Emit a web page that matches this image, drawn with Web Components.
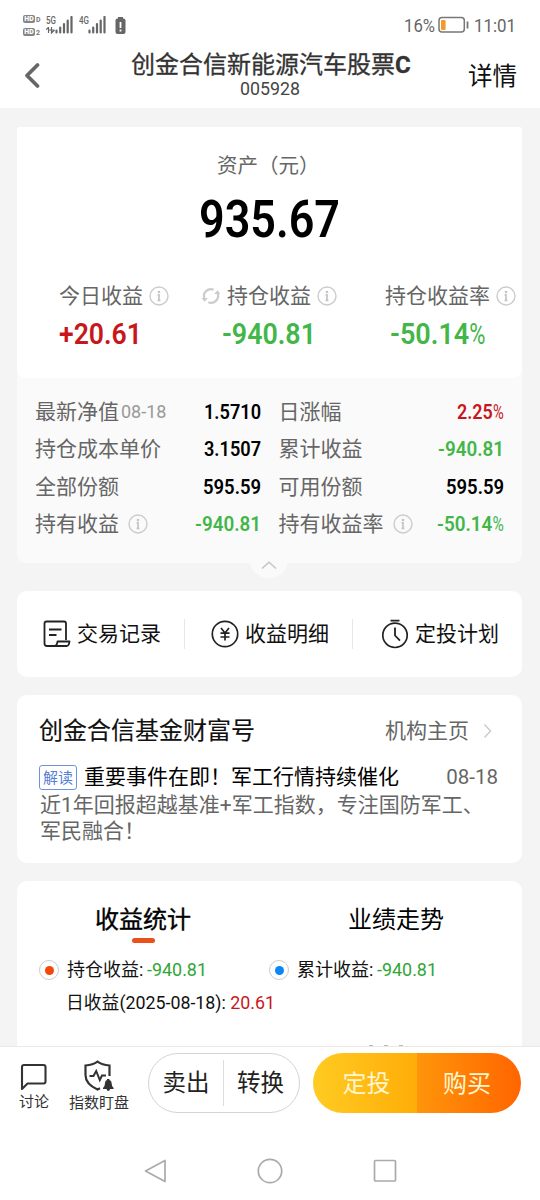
<!DOCTYPE html>
<html lang="zh-CN">
<head>
<meta charset="utf-8">
<meta name="viewport" content="width=device-width">
<title>创金合信新能源汽车股票C</title>
<style>
html,body{margin:0;background:#fff}
body{font-family:Roboto,"Noto Sans CJK SC",sans-serif;width:540px;height:1200px;overflow:hidden}
</style>
</head>
<body>
<fund-app></fund-app>
<script>
const define = (name, css, html) => customElements.define(name, class extends HTMLElement {
  connectedCallback() {
    if (this.shadowRoot) return;
    const t = document.createElement('template');
    t.innerHTML = `<style>*{box-sizing:border-box}:host{display:block;box-sizing:border-box}${css}</style>${html}`;
    this.attachShadow({mode: 'open'}).append(t.content.cloneNode(true));
  }
});

/* Text whose glyphs are condensed or widened to fill the width "w". */
customElements.define('fit-text', class extends HTMLElement {
  connectedCallback() {
    if (this.shadowRoot) return;
    const root = this.attachShadow({mode: 'open'});
    root.innerHTML = `<style>:host{display:block;flex:none;white-space:nowrap}span{display:inline-block;transform-origin:0 50%}</style><span><slot></slot></span>`;
    const w = +this.getAttribute('w'), s = root.querySelector('span');
    this.style.width = w + 'px';
    s.style.transform = `scaleX(${w / s.getBoundingClientRect().width})`;
  }
});

const icons = {
  back: [16, 26, '<path d="M13.5 2 3 12.5 13.5 23" fill="none" stroke="#666" stroke-width="3.7" stroke-linecap="round" stroke-linejoin="round"/>'],
  info: [20, 20, '<circle cx="10" cy="10" r="9" fill="none" stroke="#ccc" stroke-width="1.4"/><circle cx="10" cy="6" r="1.3" fill="#c4c4c4"/><path d="M8.6 8.8H10V14.500M8.600 14.300h2.800" fill="none" stroke="#c4c4c4" stroke-width="1.7"/>'],
  refresh: [20, 20, '<path d="M3.3 12.5A7 7 0 0 1 12.6 3.8M16.7 7.5A7 7 0 0 1 7.4 16.2" fill="none" stroke="#ccc" stroke-width="2.2"/><path d="m.5 12 3 3.700 3.500-3.700zM19.500 8l-3-3.700-3.500 3.700z" fill="#ccc"/>'],
  record: [28, 28, '<path d="M23 20V3.5Q23 1.500 21 1.500H3.500Q1.500 1.500 1.500 3.500V23.500Q1.500 26 4 26H23.500Q26 26 26.500 21.500H14.500Q14 26 11 26" fill="none" stroke="#222" stroke-width="1.8" stroke-linejoin="round"/><path d="M6 9.500H18.500M6 15H13.500" stroke="#222" stroke-width="1.8"/>'],
  yuan: [28, 28, '<circle cx="14" cy="14" r="12.7" fill="none" stroke="#222" stroke-width="1.7"/><path d="m10 8 4 5 4-5M9.500 13.200H18.500M9.500 17H18.500M14 13v7.500" fill="none" stroke="#222" stroke-width="1.7"/>'],
  timer: [28, 30, '<circle cx="14" cy="16.300" r="12.200" fill="none" stroke="#222" stroke-width="1.7"/><path d="M9.500 1.600H18.500M14 8.600V16.500L19 21.700" fill="none" stroke="#222" stroke-width="1.8"/>'],
  right: [9, 16, '<path d="m1.500 1.500 6 6.500-6 6.500" fill="none" stroke="#ccc" stroke-width="1.5"/>'],
  up: [16, 9, '<path d="m1 7.500 7-6.300 7 6.300" fill="none" stroke="#c4c4c4" stroke-width="1.500"/>'],
  chat: [28, 28, '<path d="M2 26V4Q2 2 4 2H23.500Q25.500 2 25.500 4V18.500Q25.500 20.500 23.500 20.500H7.500Z" fill="none" stroke="#333" stroke-width="2.1" stroke-linejoin="round"/>'],
  shield: [32, 32, '<path d="M26.500 16V5.500Q19 5 14.500 1.700Q10 5 2.500 5.500V15Q2.500 24 14.500 29.500L17 28.200" fill="none" stroke="#333" stroke-width="2.200"/><path d="M6.500 16h4l2.700-5 3.600 9 2.200-4.500H23" fill="none" stroke="#333" stroke-width="2"/><path d="M20 29v-1q2-1.500 2-5 0-2.500 2-3V19h2.400v1q2.200.5 2.200 3 0 3.500 2 5v1h-3.500q-.5 2-1.800 2t-1.800-2z" fill="#333"/>'],
  signal: [18, 18, '<path d="M1.500 14.500v2M5.200 11.500v5M9 8v8.500M12.700 4.500v12M16.500 1v15.500" stroke="#666" stroke-width="2.200" stroke-linecap="round"/>'],
  arrows: [9, 7, '<path d="M0 2.500 2.500.500V6M5.500 0v6L8.500 3M3 3h5" fill="none" stroke="#666" stroke-width="1.200"/>'],
  alert: [11, 18, '<path d="M3 0h5v2H3z" fill="#666"/><rect x=".5" y="1.500" width="10" height="15.500" rx="2" fill="#666"/><path d="M5.500 5v6M5.500 12.500v2" stroke="#fff" stroke-width="1.800"/>'],
  battery: [32, 18, '<rect x="1" y="1.500" width="25.300" height="14.500" rx="3" fill="none" stroke="#777" stroke-width="1.500"/><rect x="3" y="4" width="4.600" height="10" rx="1" fill="#f39a2c"/><path d="M29.500 5.500v7" stroke="#777" stroke-width="1.800"/>'],
  navback: [24, 26, '<path d="M22 2.500V23.500L2.500 13Z" fill="none" stroke="#aaa" stroke-width="1.700" stroke-linejoin="round"/>'],
  navhome: [26, 26, '<circle cx="13" cy="13" r="11.700" fill="none" stroke="#aaa" stroke-width="1.700"/>'],
  navtasks: [24, 24, '<rect x="1.500" y="1.500" width="21" height="20.500" rx="1" fill="none" stroke="#aaa" stroke-width="1.700"/>']
};
customElements.define('app-icon', class extends HTMLElement {
  connectedCallback() {
    if (this.shadowRoot) return;
    const [w, h, body] = icons[this.getAttribute('name')];
    this.attachShadow({mode: 'open'}).innerHTML = `<style>:host{display:block;flex:none;width:${w}px;height:${h}px}svg{display:block}</style><svg width="${w}" height="${h}" viewBox="0 0 ${w} ${h}">${body}</svg>`;
  }
});

define('hd-badge', ':host{display:flex;align-items:center;height:10px;font:700 7px/8px Roboto;color:#777;gap:1px}b{background:#858585;color:#fff;border-radius:2px;width:12px;height:8px;text-align:center;font-size:7px;line-height:8.500px}i{font-style:normal;font-size:7px;padding-top:1px}',
  '<b>HD</b><i><slot></slot></i>');

define('status-bar', `:host{height:50px;display:flex;align-items:flex-start;color:#666;padding:0 24px 0 23px}
.hd{padding-top:14px;display:grid;gap:3px;width:23px}.net{width:11px;padding-top:15px;font:500 10.500px/11px Roboto}.net app-icon{margin-top:1px}
.bars{margin-top:16px;margin-left:-2px}.g{margin-left:6px}.alert{margin:17px 0 0 9px}.right{margin-left:auto;display:flex;align-items:center;height:50px;font-size:18px}`,
  `<div class="hd"><hd-badge>D</hd-badge><hd-badge>2</hd-badge></div>
<div class="net"><fit-text w="10">5G</fit-text><app-icon name="arrows"></app-icon></div><app-icon class="bars" name="signal"></app-icon>
<div class="net g"><fit-text w="10">4G</fit-text></div><app-icon class="bars" style="margin-left:-2px" name="signal"></app-icon>
<app-icon class="alert" name="alert"></app-icon>
<div class="right"><fit-text w="31">16%</fit-text><app-icon name="battery" style="margin:0 4px 0 3px"></app-icon><fit-text w="42">11:01</fit-text></div>`);

define('page-header', `:host{height:58px;display:grid;grid-template-columns:131px 280px 1fr;align-items:start}
app-icon{margin:13px 0 0 24px}.t{font-size:24px;line-height:30px;font-weight:400;-webkit-text-stroke:.3px #333;color:#333;white-space:nowrap}.t b{font-weight:700}.c{font-size:17.500px;line-height:20px;color:#444;display:flex;justify-content:center;margin-top:-1px;padding-right:3px}
.d{font-size:24.500px;line-height:30px;margin:12px 0 0 57px;color:#111}`,
  `<app-icon name="back"></app-icon><div><div class="t">创金合信新能源汽车股票<b>C</b></div><div class="c"><fit-text w="60">005928</fit-text></div></div><div class="d">详情</div>`);

define('metric-item', `:host{display:block}.l{display:flex;align-items:center;height:26px;font-size:21px;line-height:28px;color:#666;white-space:nowrap}
.l app-icon{margin-left:6px}::slotted([slot=pre]){margin-right:6px}.v{height:34px;line-height:34px;font-size:29px;font-weight:600;margin-top:8px}`,
  `<div class="l"><slot name="pre"></slot><slot></slot><app-icon name="info"></app-icon></div><div class="v"><slot name="value"></slot></div>`);

define('asset-card', `:host{height:251px;background:#fff;border-radius:3px 3px 9px 9px;padding-top:25px}
.h{font-size:20.500px;line-height:28px;color:#666;padding-left:200px}.n{font-size:52px;font-weight:600;line-height:60px;display:flex;justify-content:center;margin-top:10px;color:#000;padding-right:1px}
.m{display:grid;grid-template-columns:142px 184px 1fr;margin-top:33px;padding-left:42px}.r{color:#c8161d}.g{color:#43b649}i{font-style:normal;font-weight:400;display:inline-block;width:.62em;transform:scaleX(.82);transform-origin:0 50%}`,
  `<div class="h">资产（元）</div><div class="n"><fit-text w="141">935.67</fit-text></div>
<div class="m"><metric-item>今日收益<fit-text slot="value" class="r" w="83">+20.61</fit-text></metric-item>
<metric-item><app-icon slot="pre" name="refresh"></app-icon>持仓收益<fit-text slot="value" class="g" w="94" style="margin-left:21px">-940.81</fit-text></metric-item>
<metric-item>持仓收益率<fit-text slot="value" class="g" w="96" style="margin-left:5px">-50.14<i>%</i></fit-text></metric-item></div>`);

define('detail-row', `:host{display:flex;align-items:center;height:37.500px;font-size:21px;line-height:28px;color:#666;white-space:nowrap}
.v{margin-left:auto;font-weight:600;font-size:21px}`,
  `<slot></slot><div class="v"><slot name="value"></slot></div>`);

define('holding-details', `:host{height:185px;background:#fafafa;border-radius:0 0 9px 9px;padding:15px 17px 0 18px}
.grid{display:grid;grid-template-columns:226px 225px;column-gap:17.500px;color:#000}small{font-size:18px;color:#999;margin-left:2px}.k{color:#000}.r{color:#c8161d}.g{color:#43b649}app-icon{margin-left:9px}i{font-style:normal;font-weight:400;display:inline-block;width:.62em;transform:scaleX(.82);transform-origin:0 50%}
.tab{width:38px;height:34px;border-radius:50%;background:#fafafa;margin:-3px auto 0;padding:17px 0 0 11px;position:relative;left:-1px;top:4px}.tab app-icon{margin:0}`,
  `<div class="grid">
<detail-row>最新净值<small>08-18</small><fit-text slot="value" class="k" w="57">1.5710</fit-text></detail-row>
<detail-row>日涨幅<fit-text slot="value" class="r" w="47">2.25<i>%</i></fit-text></detail-row>
<detail-row>持仓成本单价<fit-text slot="value" class="k" w="57">3.1507</fit-text></detail-row>
<detail-row>累计收益<fit-text slot="value" class="g" w="66">-940.81</fit-text></detail-row>
<detail-row>全部份额<fit-text slot="value" class="k" w="58">595.59</fit-text></detail-row>
<detail-row>可用份额<fit-text slot="value" class="k" w="58">595.59</fit-text></detail-row>
<detail-row>持有收益<app-icon name="info"></app-icon><fit-text slot="value" class="g" w="66">-940.81</fit-text></detail-row>
<detail-row>持有收益率<app-icon name="info"></app-icon><fit-text slot="value" class="g" w="67">-50.14<i>%</i></fit-text></detail-row>
</div><div class="tab"><app-icon name="up"></app-icon></div>`);

define('quick-actions', `:host{height:86px;background:#fff;border-radius:10px;margin-top:28px;display:grid;grid-template-columns:168px 168px 1fr;align-items:center}
div{height:30px;display:flex;align-items:center;font-size:21px;line-height:32px;color:#111;gap:6px;border-right:1px solid #e8e8e8;padding-left:26px}div:last-child{border:0}`,
  `<div><app-icon name="record"></app-icon>交易记录</div><div><app-icon name="yuan"></app-icon>收益明细</div><div style="padding-left:28px"><app-icon name="timer"></app-icon>定投计划</div>`);

define('fund-news', `:host{height:168px;background:#fff;border-radius:10px;margin-top:18px;padding:19px 23px 0 22px}
.h,.n{display:flex;align-items:center;white-space:nowrap}.h{height:34px;line-height:34px;font-size:24px;-webkit-text-stroke:.15px #111;color:#111}.h span{font-size:21px;-webkit-text-stroke:0;color:#666;margin-left:auto}.h app-icon{margin:0 7px 0 14px}
.n{height:28px;margin-top:15px;font-size:21px;line-height:28px;color:#000}.tag{width:38px;height:25px;border:1px solid #6c93df;border-radius:3px;color:#5580d4;font-size:15px;line-height:24px;text-align:center;margin-right:7px}.n time{margin-left:auto;color:#666;font-size:20.500px;padding-right:1px}
p{margin:2px 0 0 1px;font-size:21px;line-height:25.500px;color:#666;white-space:nowrap}`,
  `<div class="h">创金合信基金财富号<span>机构主页</span><app-icon name="right"></app-icon></div>
<div class="n"><div class="tag">解读</div>重要事件在即！军工行情持续催化<time>08-18</time></div><p>近1年回报超越基准+军工指数，专注国防军工、<br>军民融合！</p>`);

define('series-label', `:host{display:flex;align-items:center;height:24px;font-size:18px;line-height:24px;color:#111;white-space:nowrap}
.dot{width:20px;height:20px;border:1px solid #ccc;border-radius:50%;padding:4.500px;margin-right:8px}.dot::before{content:"";display:block;width:9px;height:9px;border-radius:50%;background:var(--dot)}`,
  '<div class="dot"></div><slot></slot>');

define('profit-stats', `:host{height:165px;background:#fff;border-radius:10px 10px 0 0;margin-top:18px;padding:21px 22px 0;overflow:hidden}
.tabs{display:grid;grid-template-columns:252px 1fr;font-size:24px;line-height:36px;color:#000}.a{width:96px;margin-left:56px;-webkit-text-stroke:.35px #000}.a::after{content:"";display:block;width:23px;height:5px;border-radius:3px;background:#e9501b;margin:0 auto 0}.b{margin-left:57px}
.s{display:grid;grid-template-columns:230px 1fr;margin-top:15px}.d{display:flex;margin:9px 0 0 27px;font-size:18px;line-height:24px;color:#111}.g{color:#30a636;margin-left:4px}.r{color:#c8161d}
.next{height:2px;margin:30px 0 0 326px;display:flex;gap:11px;padding-left:4px}.next i{width:4px;height:1px;background:#bbb}`,
  `<div class="tabs"><div class="a">收益统计</div><div class="b">业绩走势</div></div>
<div class="s"><series-label style="--dot:#f4480b">持仓收益:<fit-text class="g" w="60">-940.81</fit-text></series-label><series-label style="--dot:#0a86f5">累计收益:<fit-text class="g" w="60">-940.81</fit-text></series-label></div>
<div class="d"><fit-text w="209">日收益(2025-08-18): <span class="r">20.61</span></fit-text></div><div class="next"><i></i><i></i><i></i></div>`);

define('trade-bar', `:host{height:96px;background:#fff;border-top:1px solid #e9e9e9;display:flex;align-items:flex-start}
.i{font-size:15px;line-height:18px;color:#333;white-space:nowrap;display:grid;justify-items:center}.i app-icon{margin-bottom:2px}
.o{width:152px;height:60px;border:1px solid #d4d4d4;border-radius:30px;display:grid;grid-template-columns:1fr 1fr;align-items:center;font-size:23.500px;line-height:46px;color:#222;text-align:center;margin:6px 13px 0 19px}.o div:first-child{border-right:1px solid #ddd}.o div:last-child{padding-right:2px}
.p{width:208px;height:60px;border-radius:30px;overflow:hidden;display:grid;grid-template-columns:1fr 1fr;font-size:24px;line-height:62px;text-align:center;color:#fff6cf;margin-top:6px}.p div:first-child{background:linear-gradient(90deg,#ffcb22,#ffad08);padding-left:3px}.p div:last-child{background:linear-gradient(90deg,#ff950a,#ff6500);padding-right:4px}`,
  `<div class="i" style="margin:16px 0 0 19px"><app-icon name="chat"></app-icon>讨论</div><div class="i" style="margin:13px 0 0 20px"><app-icon name="shield"></app-icon>指数盯盘</div>
<div class="o"><div>卖出</div><div>转换</div></div><div class="p"><div>定投</div><div>购买</div></div>`);

define('system-nav', `:host{height:58px;display:flex;align-items:center;justify-content:center;gap:90px;padding:0 1px 0 0}`,
  '<app-icon name="navback"></app-icon><app-icon name="navhome"></app-icon><app-icon name="navtasks"></app-icon>');

define('fund-app', `:host{width:540px;height:1200px;background:#fff;overflow:hidden}main{height:938px;background:#f4f4f4;padding:19px 18px 0 17px;overflow:hidden}.stack{background:#fafafa;border-radius:3px 3px 9px 9px}`,
  `<status-bar></status-bar><page-header></page-header><main><div class="stack"><asset-card></asset-card><holding-details></holding-details></div><quick-actions></quick-actions><fund-news></fund-news><profit-stats></profit-stats></main><trade-bar></trade-bar><system-nav></system-nav>`);
</script>
</body>
</html>
